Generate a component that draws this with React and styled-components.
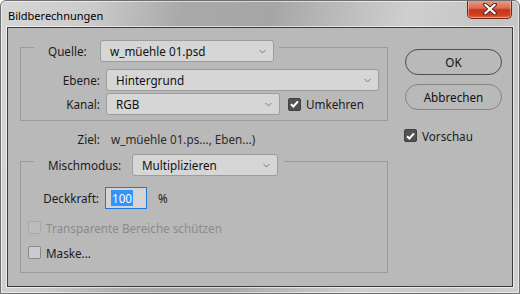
import React from 'react';
import styled, { createGlobalStyle } from 'styled-components';

const Global = createGlobalStyle`
  html, body { margin: 0; padding: 0; background: #ffffff; }
  body { font-family: "Noto Sans", "Open Sans", sans-serif; }
  * { box-sizing: border-box; }
`;

const Window = styled.div`
  width: 520px;
  height: 294px;
  display: flex;
  flex-direction: column;
  border: 1px solid #707070;
  border-radius: 6px 6px 0 0;
  background: linear-gradient(100deg, #d6d6d6 0%, #cbcbcb 16%, #a9a9a9 32%, #a6a6a6 48%, #b8b8b8 58%, #cfcfcf 72%, #c4c4c4 88%, #d0d0d0 100%);
  box-shadow: inset 0 0 0 1px rgba(255, 255, 255, 0.55);
  overflow: hidden;
`;

const TitleBar = styled.div`
  height: 26px;
  flex: none;
  display: flex;
  justify-content: space-between;
  align-items: flex-start;
  padding-left: 7px;
  padding-right: 7px;
`;

const Title = styled.div`
  font-size: 11px;
  color: #000;
  line-height: 14px;
  padding-top: 8px;
`;

const CloseButton = styled.div`
  width: 45px;
  height: 19px;
  margin-top: -1px;
  display: flex;
  align-items: center;
  justify-content: center;
  border: 1px solid #6f2a1e;
  border-top: none;
  border-radius: 0 0 5px 5px;
  background: linear-gradient(180deg, #eaa08c 0%, #dc6a50 45%, #c8321a 55%, #d0421f 85%, #e0704c 100%);
  box-shadow: inset 0 0 0 1px rgba(255, 220, 210, 0.45);
`;

const Client = styled.div`
  flex: 1;
  margin: 0 6px 6px 6px;
  border: 1px solid #3d3d3d;
  box-shadow: 0 0 0 1px rgba(255, 255, 255, 0.6);
  background: #b9b9b9;
  display: flex;
  padding: 0 0 0 12px;
  color: #1b1b1b;
  font-size: 11.7px;
`;

const LeftCol = styled.div`
  width: 368px;
  display: flex;
  flex-direction: column;
`;

const RightCol = styled.div`
  width: 97px;
  margin-left: 17px;
  padding-top: 21px;
  display: flex;
  flex-direction: column;
`;

const Group = styled.div`
  margin-top: ${(p) => p.$top}px;
  border: 1px solid #9b9b9b;
  padding-bottom: ${(p) => p.$bottom}px;
  display: flex;
  flex-direction: column;
`;

const Legend = styled.div`
  margin-top: -8px;
  margin-left: 13px;
  align-self: flex-start;
  display: flex;
  align-items: center;
  background: #b9b9b9;
  padding-right: ${(p) => p.$right}px;
`;

const LegendLabel = styled.span`
  width: ${(p) => p.$w}px;
  padding-left: 14px;
  margin-right: 6px;
  white-space: nowrap;
`;

const Row = styled.div`
  display: flex;
  align-items: center;
  margin-top: ${(p) => p.$top || 0}px;
  padding-left: ${(p) => p.$left || 0}px;
`;

const FieldLabel = styled.span`
  width: ${(p) => p.$w}px;
  text-align: right;
  margin-right: ${(p) => p.$gap}px;
  white-space: nowrap;
`;

const Select = styled.div`
  width: ${(p) => p.$w}px;
  height: 22px;
  display: flex;
  align-items: center;
  justify-content: space-between;
  padding: 0 7px 0 9px;
  background: #d6d6d6;
  border: 1px solid #9c9c9c;
  border-radius: 3px;
  color: #111;
  white-space: nowrap;
`;

const Chevron = () => (
  <svg width="7" height="5" viewBox="0 0 7 5">
    <path d="M0.5 1 L3.5 4 L6.5 1" fill="none" stroke="#7a7a7a" strokeWidth="1" />
  </svg>
);

const Box = styled.span`
  width: 13px;
  height: 13px;
  flex: none;
  display: inline-flex;
  align-items: center;
  justify-content: center;
  border-radius: 2px;
  border: 1px solid ${(p) => (p.$checked ? '#3f3f3f' : p.$disabled ? '#a9a9a9' : '#8a8a8a')};
  background: ${(p) => (p.$checked ? '#525252' : p.$disabled ? '#bcbcbc' : '#cbcbcb')};
  margin-right: 5px;
`;

const Check = () => (
  <svg width="9" height="8" viewBox="0 0 9 8">
    <path d="M1 4.2 L3.4 6.5 L8 1.3" fill="none" stroke="#ffffff" strokeWidth="2" />
  </svg>
);

const CheckRow = styled.div`
  display: flex;
  align-items: center;
  height: 17px;
  margin-top: ${(p) => p.$top || 0}px;
  margin-left: ${(p) => p.$left || 0}px;
  color: ${(p) => (p.$disabled ? '#8b8b8b' : '#1b1b1b')};
  white-space: nowrap;
`;

const Checkbox = ({ checked, disabled, label, top, left }) => (
  <CheckRow $top={top} $left={left} $disabled={disabled}>
    <Box $checked={checked} $disabled={disabled}>{checked && <Check />}</Box>
    {label}
  </CheckRow>
);

const ZielValue = styled.span`
  color: #2b2b2b;
  white-space: nowrap;
`;

const NumberInput = styled.div`
  width: 42px;
  height: 22px;
  display: flex;
  align-items: center;
  padding-left: 5px;
  background: #d4d4d4;
  border: 1px solid #1f78e0;
`;

const Selected = styled.span`
  background: #3294f8;
  color: #fff;
  line-height: 16px;
  padding: 0 1px;
`;

const Percent = styled.span`
  margin-left: 11px;
`;

const Button = styled.div`
  height: 26px;
  margin-top: ${(p) => p.$top || 0}px;
  display: flex;
  align-items: center;
  justify-content: center;
  border: 1px solid ${(p) => (p.$default ? '#4d4d4d' : '#858585')};
  border-radius: 13px;
  color: #111;
`;

export default function App() {
  return (
    <>
      <Global />
      <Window>
        <TitleBar>
          <Title>Bildberechnungen</Title>
          <CloseButton>
            <svg width="14" height="12" viewBox="0 0 14 12">
              <path d="M2 1.5 L12 10.5 M12 1.5 L2 10.5" stroke="#5a2a22" strokeWidth="4" strokeLinecap="round" />
              <path d="M2.3 1.8 L11.7 10.2 M11.7 1.8 L2.3 10.2" stroke="#ffffff" strokeWidth="2.2" strokeLinecap="round" />
            </svg>
          </CloseButton>
        </TitleBar>
        <Client>
          <LeftCol>
            <Group $top={19} $bottom={5}>
              <Legend $right={5}>
                <LegendLabel $w={60}>Quelle:</LegendLabel>
                <Select $w={174}>
                  w_müehle 01.psd
                  <Chevron />
                </Select>
              </Legend>
              <Row $top={7}>
                <FieldLabel $w={79} $gap={6}>Ebene:</FieldLabel>
                <Select $w={273}>
                  Hintergrund
                  <Chevron />
                </Select>
              </Row>
              <Row $top={2}>
                <FieldLabel $w={79} $gap={6}>Kanal:</FieldLabel>
                <Select $w={174}>
                  RGB
                  <Chevron />
                </Select>
                <Checkbox checked label="Umkehren" left={8} />
              </Row>
            </Group>
            <Row $top={10}>
              <FieldLabel $w={80} $gap={11}>Ziel:</FieldLabel>
              <ZielValue>w_müehle 01.ps..., Eben...)</ZielValue>
            </Row>
            <Group $top={14} $bottom={11}>
              <Legend $right={6}>
                <LegendLabel $w={92}>Mischmodus:</LegendLabel>
                <Select $w={146}>
                  Multiplizieren
                  <Chevron />
                </Select>
              </Legend>
              <Row $top={11} $left={18}>
                <FieldLabel $w={60} $gap={6}>Deckkraft:</FieldLabel>
                <NumberInput>
                  <Selected>100</Selected>
                </NumberInput>
                <Percent>%</Percent>
              </Row>
              <Checkbox disabled label="Transparente Bereiche schützen" top={10} left={7} />
              <Checkbox label="Maske..." top={8} left={7} />
            </Group>
          </LeftCol>
          <RightCol>
            <Button $default>OK</Button>
            <Button $top={9}>Abbrechen</Button>
            <Checkbox checked label="Vorschau" top={17} left={-1} />
          </RightCol>
        </Client>
      </Window>
    </>
  );
}
